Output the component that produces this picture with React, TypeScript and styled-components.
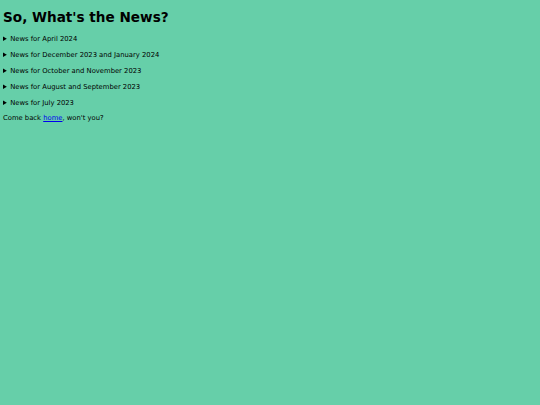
import React from "react";
import styled, { createGlobalStyle } from "styled-components";

const Global = createGlobalStyle`
  html, body {
    margin: 0;
    background: #66cfa9;
  }
  body {
    padding: 3px;
    font-family: "DejaVu Sans", sans-serif;
    color: #000;
  }
`;

const Page = styled.main`
  display: flex;
  flex-direction: column;
`;

const Title = styled.h1`
  font-size: 13.6px;
  line-height: 16px;
  font-weight: bold;
  margin: 6px 0 10px;
`;

const Item = styled.details`
  font-size: 6.8px;
  line-height: 8px;
  margin-bottom: 8px;

  &:last-of-type {
    margin-bottom: 7px;
  }
`;

const Summary = styled.summary`
  cursor: pointer;
`;

const Footer = styled.p`
  font-size: 6.8px;
  line-height: 8px;
  margin: 0;
`;

const Link = styled.a`
  color: #0000ee;
`;

const months = [
  "April 2024",
  "December 2023 and January 2024",
  "October and November 2023",
  "August and September 2023",
  "July 2023",
];

export default function App() {
  return (
    <>
      <Global />
      <Page>
        <Title>So, What's the News?</Title>
        {months.map((m) => (
          <Item key={m}>
            <Summary>News for {m}</Summary>
          </Item>
        ))}
        <Footer>
          Come back <Link href="#">home</Link>, won't you?
        </Footer>
      </Page>
    </>
  );
}
